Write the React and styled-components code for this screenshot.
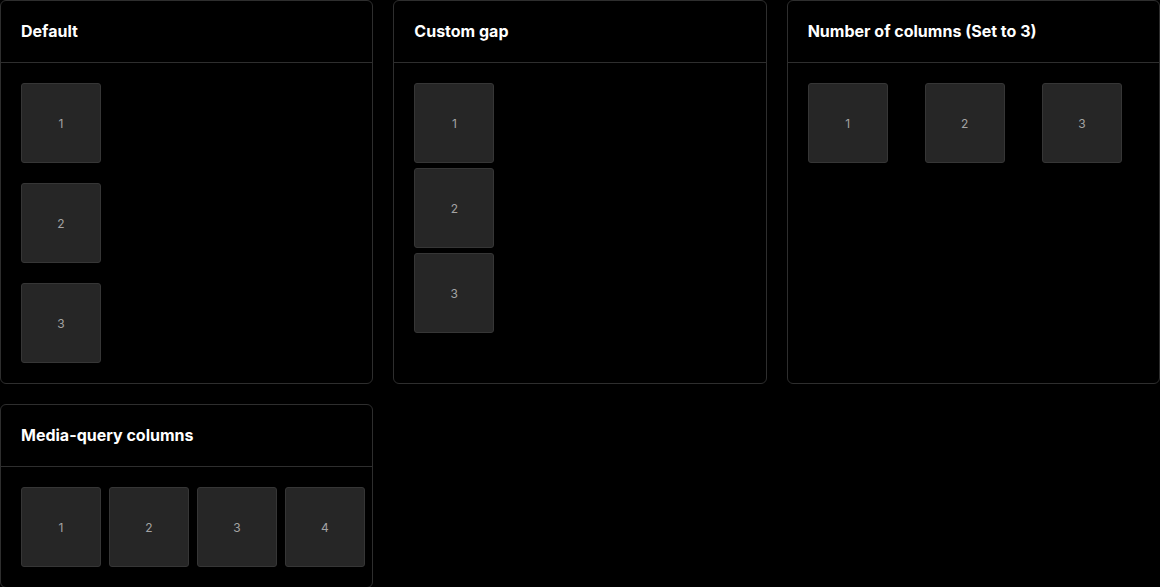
import styled, { createGlobalStyle } from "styled-components";

const GlobalStyle = createGlobalStyle`
  body {
    margin: 0;
    background: #000;
    font-family: Inter, "Liberation Sans", sans-serif;
  }
`;

const demos = [
  { title: "Default", layout: "column", gap: 20, items: 3 },
  { title: "Custom gap", layout: "column", gap: 5, items: 3 },
  { title: "Number of columns (Set to 3)", layout: "grid", gap: 20, items: 3 },
  { title: "Media-query columns", layout: "row", gap: 8, items: 4 },
];

const App = () => {
  return (
    <>
      <GlobalStyle />
      <Page>
        {demos.map((demo) => (
          <Card key={demo.title}>
            <Header>
              <Title>{demo.title}</Title>
            </Header>
            <Body>
              <Stack $layout={demo.layout} $gap={demo.gap}>
                {Array.from({ length: demo.items }, (_, i) => (
                  <Tile key={i}>{i + 1}</Tile>
                ))}
              </Stack>
            </Body>
          </Card>
        ))}
      </Page>
    </>
  );
};

const Page = styled.div`
  display: grid;
  grid-template-columns: repeat(3, minmax(0, 1fr));
  gap: 20px;
  width: 1160px;
  box-sizing: border-box;
`;

const Card = styled.div`
  display: flex;
  flex-direction: column;
  min-width: 0;
  border: 1px solid #2e2e2e;
  border-radius: 6px;
  background: #000;
`;

const Header = styled.div`
  padding: 20px 20px;
  border-bottom: 1px solid #2e2e2e;
`;

const Title = styled.div`
  color: #fff;
  font-size: 16px;
  font-weight: 700;
  line-height: 21px;
`;

const Body = styled.div`
  padding: 20px;
`;

const Stack = styled.div`
  display: ${(p) => (p.$layout === "grid" ? "grid" : "flex")};
  flex-direction: ${(p) => (p.$layout === "column" ? "column" : "row")};
  grid-template-columns: repeat(3, 1fr);
  align-items: flex-start;
  gap: ${(p) => p.$gap}px;
`;

const Tile = styled.div`
  display: flex;
  align-items: center;
  justify-content: center;
  flex-shrink: 0;
  width: 80px;
  height: 80px;
  box-sizing: border-box;
  background: #262626;
  border: 1px solid #363636;
  border-radius: 3px;
  color: #a3a3a3;
  font-size: 12px;
`;

export default App;
